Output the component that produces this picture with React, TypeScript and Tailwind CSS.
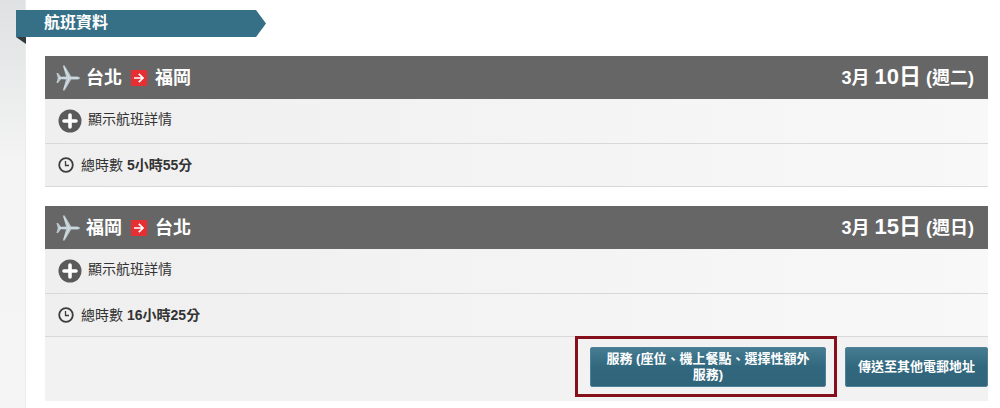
import React from 'react';

interface Flight {
  from: string;
  to: string;
  month: string;
  day: string;
  weekday: string;
  duration: string;
}

const flights: Flight[] = [
  { from: '台北', to: '福岡', month: '3月', day: '10日', weekday: '(週二)', duration: '5小時55分' },
  { from: '福岡', to: '台北', month: '3月', day: '15日', weekday: '(週日)', duration: '16小時25分' },
];

function PlaneIcon() {
  return (
    <svg width="24" height="26" viewBox="0 0 24 26" className="shrink-0" aria-hidden="true">
      <path
        d="M24 13c0 .8-1.6 1.6-3.2 1.6h-5.6L8.6 25.4H6.8l3.2-10.8-5-.4L2 18H.4L1.8 13 .4 8H2l3 3.8 5-.4L6.8.6h1.8l6.6 10.8h5.6c1.6 0 3.2.8 3.2 1.6z"
        fill="#b9c7cd"
      />
      <path d="M2.5 13h20M8.2 2.5l4.6 9.5M8.2 23.5l4.6-9.5" fill="none" stroke="#dde8ec" strokeWidth="1" />
    </svg>
  );
}

function ArrowIcon() {
  return (
    <svg width="16" height="16" viewBox="0 0 16 16" className="mr-2 ml-[9px] shrink-0" role="img" aria-label="至">
      <rect width="16" height="16" fill="#e62e33" />
      <path d="M3 8h9M7.8 3.8L12 8l-4.2 4.2" fill="none" stroke="#fff" strokeWidth="1.7" />
    </svg>
  );
}

function PlusIcon() {
  return (
    <svg width="24" height="24" viewBox="0 0 24 24" className="shrink-0" aria-hidden="true">
      <circle cx="12" cy="12" r="11.5" fill="#5a5a5a" />
      <path d="M12 6v12M6 12h12" stroke="#fff" strokeWidth="3.6" strokeLinecap="round" />
    </svg>
  );
}

function ClockIcon() {
  return (
    <svg width="16" height="16" viewBox="0 0 16 16" className="shrink-0" aria-hidden="true">
      <circle cx="8" cy="8" r="6.8" fill="none" stroke="#3c3c3c" strokeWidth="1.8" />
      <path d="M7.5 4v4.5H11" fill="none" stroke="#3c3c3c" strokeWidth="1.3" />
    </svg>
  );
}

function FlightCard({ flight, children }: { flight: Flight; children?: React.ReactNode }) {
  return (
    <section className="bg-linear-to-r from-[#efefef] to-[#f8f8f8]">
      <header className="flex h-[43px] items-center justify-between bg-[#666] pr-[14px] pl-[11px] font-bold text-white">
        <h3 className="flex items-center text-lg leading-6">
          <PlaneIcon />
          <span className="ml-[6px]">{flight.from}</span>
          <ArrowIcon />
          <span>{flight.to}</span>
        </h3>
        <p className="text-lg leading-6">
          {flight.month} <span className="text-[22px]">{flight.day}</span> {flight.weekday}
        </p>
      </header>
      <div className="flex h-[45px] items-center border-b border-[#d8d8d8] pl-[13px]">
        <button type="button" className="flex cursor-pointer items-center gap-[6px] text-sm">
          <PlusIcon />
          <span className="pb-1">顯示航班詳情</span>
        </button>
      </div>
      <p className="flex h-[43px] items-center border-b border-[#d8d8d8] pl-[13px] text-sm">
        <ClockIcon />
        <span className="ml-[7px]">總時數</span>
        <strong className="ml-1 font-bold">{flight.duration}</strong>
      </p>
      {children}
    </section>
  );
}

function ActionButton({ children }: { children: React.ReactNode }) {
  return (
    <button
      type="button"
      className="min-h-10 max-w-[236px] cursor-pointer rounded-xs border border-[#4f8298] bg-linear-to-b from-[#457c92] via-[#32687e] to-[#2f6479] px-3 text-[13px] leading-4 font-bold text-white"
    >
      {children}
    </button>
  );
}

export default function App() {
  return (
    <div
      lang="zh-Hant"
      className="flex min-h-screen bg-white font-['Liberation_Sans','Noto_Sans_CJK_TC',sans-serif] text-[#333]"
    >
      <div className="w-[26px] shrink-0 border-r border-[#ececec] bg-linear-to-b from-[#dfe1e2] via-[#f4f4f4] via-40% to-[#f5f5f5]" />

      <main className="min-w-0 flex-1 pt-[10px] pr-[12px]">
        {/* Ribbon, folded behind the left edge of the page */}
        <div className="-ml-[10px] w-[250px]">
          <h2 className="h-[27px] bg-[#357086] pl-7 text-base leading-[26px] font-bold text-white [clip-path:polygon(0_0,96%_0,100%_50%,96%_100%,0_100%)]">
            航班資料
          </h2>
          <svg width="10" height="7" viewBox="0 0 10 7" className="block" aria-hidden="true">
            <path d="M0 0h10v7z" fill="#303a3f" />
          </svg>
        </div>

        <div className="mt-3 ml-[19px] flex flex-col gap-[19px]">
          <FlightCard flight={flights[0]} />
          <FlightCard flight={flights[1]}>
            <div className="flex h-16 items-start justify-end gap-[19px] bg-[#f2f2f2] pt-[10px]">
              <div className="relative flex">
                <ActionButton>服務 (座位、機上餐點、選擇性額外服務)</ActionButton>
                <div className="pointer-events-none absolute -top-[11px] -right-[11px] -bottom-[10px] -left-[15px] border-3 border-[#850f1b]" />
              </div>
              <ActionButton>傳送至其他電郵地址</ActionButton>
            </div>
          </FlightCard>
        </div>
      </main>
    </div>
  );
}
